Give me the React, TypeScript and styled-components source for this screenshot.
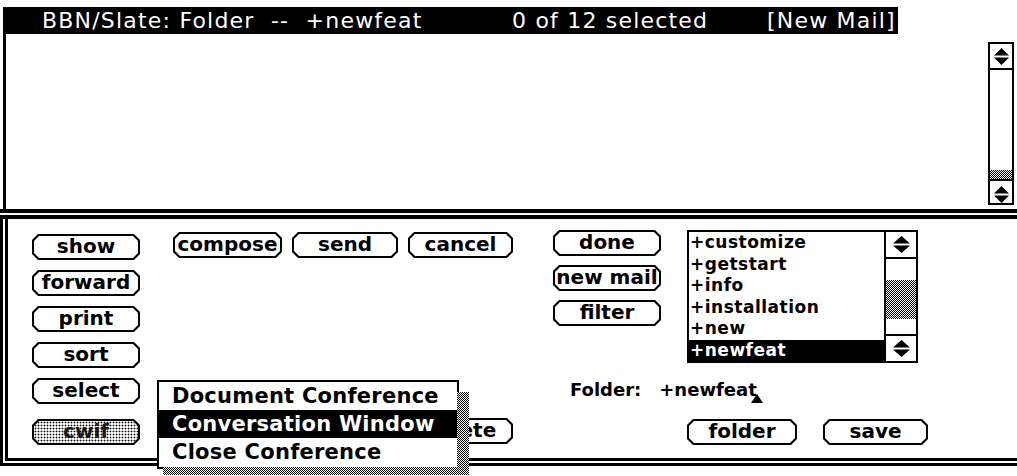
import React from 'react';
import styled, { createGlobalStyle } from 'styled-components';

const GlobalStyle = createGlobalStyle`
  html, body {
    margin: 0;
    padding: 0;
    background: #fff;
  }
  body {
    width: 1017px;
    height: 476px;
    overflow: hidden;
  }
`;

const stipple = `repeating-conic-gradient(#000 0% 25%, #fff 0% 50%) 0 0 / 2px 2px`;
const dots = `radial-gradient(circle, #000 0.8px, transparent 1.1px) 0 0 / 3px 3px, #fff`;

const Window = styled.div`
  width: 1017px;
  height: 476px;
  box-sizing: border-box;
  padding-top: 7px;
  display: flex;
  flex-direction: column;
  font-family: 'DejaVu Sans', 'Liberation Sans', sans-serif;
  color: #000;
`;

const TitleBar = styled.div`
  flex-shrink: 0;
  margin-left: 3px;
  width: 895px;
  height: 27px;
  box-sizing: border-box;
  padding-left: 39px;
  background: #000;
  color: #fff;
  display: flex;
  align-items: center;
  font-size: 22px;
  letter-spacing: 1.2px;
  white-space: pre;
  overflow: hidden;
`;

const TitleSeg = styled.span<{ $w?: number }>`
  width: ${(p) => (p.$w ? `${p.$w}px` : 'auto')};
  flex-shrink: 0;
`;

const TopPane = styled.div`
  flex-shrink: 0;
  height: 175px;
  margin-left: 3px;
  border-left: 3px solid #000;
  box-sizing: border-box;
  padding: 8px 3px 4px 0;
  display: flex;
  justify-content: flex-end;
`;

const ScrollBar = styled.div<{ $w: number }>`
  width: ${(p) => p.$w}px;
  border: 2px solid #000;
  box-sizing: border-box;
  display: flex;
  flex-direction: column;
`;

const ArrowBox = styled.div<{ $h: number; $top?: boolean }>`
  height: ${(p) => p.$h}px;
  flex-shrink: 0;
  display: flex;
  align-items: center;
  justify-content: center;
  ${(p) => (p.$top ? 'border-bottom: 2px solid #000;' : 'border-top: 2px solid #000;')}
`;

const Trough = styled.div`
  flex: 1;
  display: flex;
  flex-direction: column;
`;

const Thumb = styled.div<{ $top: number; $h: number }>`
  margin-top: ${(p) => p.$top}px;
  height: ${(p) => p.$h}px;
  background: ${stipple};
`;

const Divider = styled.div`
  flex-shrink: 0;
  height: 2px;
  border-top: 4px solid #000;
  border-bottom: 4px solid #000;
`;

const BottomPane = styled.div`
  position: relative;
  flex-shrink: 0;
  height: 247px;
  box-sizing: border-box;
  border-left: 8px double #000;
  border-bottom: 8px double #000;
  display: flex;
`;

const LeftCol = styled.div`
  margin-left: 24px;
  width: 108px;
  padding: 15px 0 13px;
  display: flex;
  flex-direction: column;
  gap: 10px;
`;

const MidCol = styled.div`
  margin-left: 33px;
  padding: 13px 0 14px;
  display: flex;
  flex-direction: column;
  justify-content: space-between;
`;

const ButtonRow = styled.div<{ $gap: number; $indent?: number }>`
  display: flex;
  gap: ${(p) => p.$gap}px;
  margin-left: ${(p) => p.$indent ?? 0}px;
`;

const RightArea = styled.div`
  margin-left: 40px;
  padding: 11px 0 13px;
  display: flex;
  flex-direction: column;
`;

const ButtonCol = styled.div`
  width: 108px;
  display: flex;
  flex-direction: column;
  gap: 9px;
`;

const BtnShell = styled.div<{ $w: number; $end?: boolean; $push?: boolean }>`
  width: ${(p) => p.$w}px;
  height: 26px;
  flex-shrink: 0;
  box-sizing: border-box;
  padding: 2px;
  background: #000;
  align-self: ${(p) => (p.$end ? 'flex-end' : 'auto')};
  margin-top: ${(p) => (p.$push ? 'auto' : '0')};
  clip-path: polygon(6px 0, calc(100% - 6px) 0, 100% 6px, 100% calc(100% - 6px),
    calc(100% - 6px) 100%, 6px 100%, 0 calc(100% - 6px), 0 6px);
`;

const BtnFace = styled.div<{ $dim?: boolean }>`
  height: 100%;
  display: flex;
  align-items: center;
  justify-content: center;
  background: ${(p) => (p.$dim ? dots : '#fff')};
  color: ${(p) => (p.$dim ? '#1a1a1a' : '#000')};
  font-weight: bold;
  font-size: 20px;
  line-height: 1;
  padding-bottom: 2px;
  box-sizing: border-box;
  clip-path: polygon(5px 0, calc(100% - 5px) 0, 100% 5px, 100% calc(100% - 5px),
    calc(100% - 5px) 100%, 5px 100%, 0 calc(100% - 5px), 0 5px);
`;

const TopRow = styled.div`
  display: flex;
  gap: 26px;
`;

const ListBox = styled.div`
  width: 231px;
  height: 133px;
  box-sizing: border-box;
  border: 2px solid #000;
  display: flex;
`;

const ListItems = styled.div`
  flex: 1;
  display: flex;
  flex-direction: column;
`;

const ListItem = styled.div<{ $selected?: boolean }>`
  flex: 1;
  display: flex;
  align-items: center;
  padding-left: 1px;
  background: ${(p) => (p.$selected ? '#000' : '#fff')};
  color: ${(p) => (p.$selected ? '#fff' : '#000')};
  font-weight: bold;
  font-size: 17px;
  letter-spacing: 0.5px;
  line-height: 1;
`;

const ListScroll = styled.div`
  width: 30px;
  border-left: 2px solid #000;
  display: flex;
  flex-direction: column;
`;

const FolderLine = styled.div`
  margin: 16px 0 0 17px;
  font-weight: bold;
  font-size: 18px;
  line-height: 22px;
  display: flex;
  align-items: baseline;
`;

const FolderName = styled.span`
  margin-left: 18px;
  position: relative;
`;

const Caret = styled.span`
  position: absolute;
  right: -6px;
  bottom: -2px;
  width: 0;
  height: 0;
  border-left: 6px solid transparent;
  border-right: 6px solid transparent;
  border-bottom: 9px solid #000;
`;

const BottomButtons = styled(ButtonRow)`
  margin-top: auto;
`;

const Menu = styled.div`
  position: absolute;
  left: 149px;
  top: 161px;
  width: 298px;
  z-index: 2;
  border: 2px solid #000;
  background: #fff;
  &::before {
    content: '';
    position: absolute;
    left: 4px;
    top: 10px;
    right: -12px;
    bottom: -8px;
    z-index: -1;
    background: ${stipple};
  }
`;

const MenuItem = styled.div<{ $active?: boolean; $h: number }>`
  height: ${(p) => p.$h}px;
  display: flex;
  align-items: center;
  padding-left: 13px;
  background: ${(p) => (p.$active ? '#000' : '#fff')};
  color: ${(p) => (p.$active ? '#fff' : '#000')};
  font-weight: bold;
  font-size: 21px;
  letter-spacing: 0.25px;
  line-height: 1;
`;

function UpDown({ w, h }: { w: number; h: number }) {
  const mid = h / 2;
  return (
    <svg width={w} height={h} viewBox={`0 0 ${w} ${h}`}>
      <path
        d={`M${w / 2} 0 L${w} ${mid - 1} L0 ${mid - 1} Z M0 ${mid + 1} L${w} ${mid + 1} L${w / 2} ${h} Z`}
        fill="#000"
      />
    </svg>
  );
}

function Button({
  label,
  w,
  end,
  push,
  dim,
}: {
  label: string;
  w: number;
  end?: boolean;
  push?: boolean;
  dim?: boolean;
}) {
  return (
    <BtnShell $w={w} $end={end} $push={push}>
      <BtnFace $dim={dim}>{label}</BtnFace>
    </BtnShell>
  );
}

const folders = ['+customize', '+getstart', '+info', '+installation', '+new', '+newfeat'];

export default function App() {
  return (
    <>
      <GlobalStyle />
      <Window>
        <TitleBar>
          <TitleSeg $w={470}>BBN/Slate: Folder  --  +newfeat</TitleSeg>
          <TitleSeg $w={255}>0 of 12 selected</TitleSeg>
          <TitleSeg>[New Mail]</TitleSeg>
        </TitleBar>

        <TopPane>
          <ScrollBar $w={26}>
            <ArrowBox $h={24} $top>
              <UpDown w={15} h={17} />
            </ArrowBox>
            <Trough>
              <Thumb $top={100} $h={9} />
            </Trough>
            <ArrowBox $h={26}>
              <UpDown w={15} h={17} />
            </ArrowBox>
          </ScrollBar>
        </TopPane>

        <Divider />

        <BottomPane>
          <LeftCol>
            <Button label="show" w={108} />
            <Button label="forward" w={108} />
            <Button label="print" w={108} />
            <Button label="sort" w={108} />
            <Button label="select" w={108} />
            <Button label="cwif" w={108} push dim />
          </LeftCol>

          <MidCol>
            <ButtonRow $gap={10}>
              <Button label="compose" w={109} />
              <Button label="send" w={106} />
              <Button label="cancel" w={105} />
            </ButtonRow>
            <Button label="delete" w={105} end />
          </MidCol>

          <RightArea>
            <TopRow>
              <ButtonCol>
                <Button label="done" w={108} />
                <Button label="new mail" w={108} />
                <Button label="filter" w={108} />
              </ButtonCol>
              <ListBox>
                <ListItems>
                  {folders.map((f) => (
                    <ListItem key={f} $selected={f === '+newfeat'}>
                      {f}
                    </ListItem>
                  ))}
                </ListItems>
                <ListScroll>
                  <ArrowBox $h={25} $top>
                    <UpDown w={17} h={17} />
                  </ArrowBox>
                  <Trough>
                    <Thumb $top={21} $h={39} />
                  </Trough>
                  <ArrowBox $h={25}>
                    <UpDown w={17} h={17} />
                  </ArrowBox>
                </ListScroll>
              </ListBox>
            </TopRow>

            <FolderLine>
              Folder:
              <FolderName>
                +newfeat
                <Caret />
              </FolderName>
            </FolderLine>

            <BottomButtons $gap={26} $indent={134}>
              <Button label="folder" w={110} />
              <Button label="save" w={105} />
            </BottomButtons>
          </RightArea>

          <Menu>
            <MenuItem $h={28}>Document Conference</MenuItem>
            <MenuItem $h={28} $active>
              Conversation Window
            </MenuItem>
            <MenuItem $h={29}>Close Conference</MenuItem>
          </Menu>
        </BottomPane>
      </Window>
    </>
  );
}
